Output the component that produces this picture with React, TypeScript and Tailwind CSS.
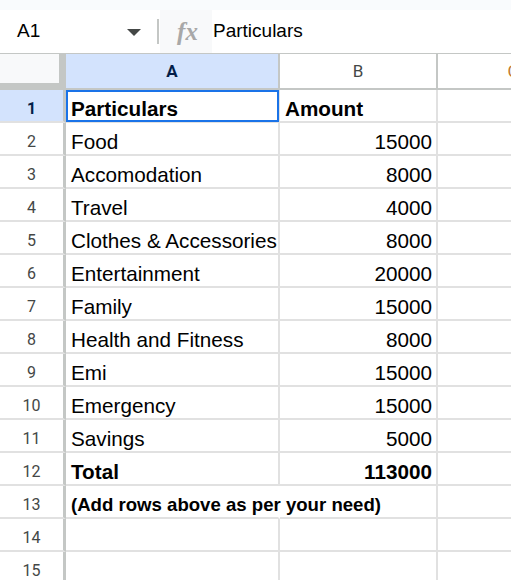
import React from "react";

const rows: { a: string; b: string; bold?: boolean; note?: boolean }[] = [
  { a: "Particulars", b: "Amount", bold: true },
  { a: "Food", b: "15000" },
  { a: "Accomodation", b: "8000" },
  { a: "Travel", b: "4000" },
  { a: "Clothes & Accessories", b: "8000" },
  { a: "Entertainment", b: "20000" },
  { a: "Family", b: "15000" },
  { a: "Health and Fitness", b: "8000" },
  { a: "Emi", b: "15000" },
  { a: "Emergency", b: "15000" },
  { a: "Savings", b: "5000" },
  { a: "Total", b: "113000", bold: true },
  { a: "(Add rows above as per your need)", b: "", note: true },
  { a: "", b: "" },
  { a: "", b: "" },
];

export default function App() {
  return (
    <div className="w-[511px] h-[580px] overflow-hidden bg-white" style={{ fontFamily: '"Liberation Sans", Arial, sans-serif' }}>
      <div className="h-[10px] bg-[#f9fbfd]" />
      {/* formula bar */}
      <div className="h-[43px] flex items-stretch bg-white">
        <div className="w-[157px] flex items-center pl-[17px] pr-[16px]">
          <span className="text-[19px] text-black flex-1">A1</span>
          <svg width="14" height="7" viewBox="0 0 14 7" className="mt-[1px]">
            <path d="M0 0 L14 0 L7 7 Z" fill="#444746" />
          </svg>
        </div>
        <div className="w-[2px] my-[9px] bg-[#c4c7c5]" />
        <div className="w-[52px] ml-[1px] bg-[#f8f9fa] flex items-center justify-center">
          <span className="text-[25px] italic font-bold text-[#a8a8a8] pl-[3px]" style={{ fontFamily: '"Liberation Serif", serif' }}>fx</span>
        </div>
        <div className="flex items-center pl-[1px] text-[19px] text-black">Particulars</div>
      </div>
      {/* header row */}
      <div className="h-[37px] flex border-t border-t-[#c4c7c5]" style={{ fontFamily: 'Roboto, "Liberation Sans", sans-serif' }}>
        <div className="w-[66px] shrink-0 bg-[#c4c7c5]">
          <div className="w-[59px] h-[29px] bg-[#f8f9fa]" />
        </div>
        <div className="w-[214px] shrink-0 bg-[#d3e3fd] border-r-2 border-b-2 border-[#c4c7c5] flex items-center justify-center pt-[2px] text-[17px] font-bold text-[#041e49]">A</div>
        <div className="w-[158px] shrink-0 bg-white border-r-2 border-b-2 border-[#c4c7c5] flex items-center justify-center pt-[2px] text-[17px] text-[#444746]">B</div>
        <div className="w-[152px] shrink-0 bg-white border-r-2 border-b-2 border-[#c4c7c5] flex items-center justify-center pt-[2px] text-[17px] text-[#c07a30]">C</div>
      </div>
      {rows.map((r, i) => (
        <div key={i} className="h-[33px] flex">
          <div
            className={
              i === 0
                ? "w-[66px] shrink-0 bg-[#d3e3fd] border-r-[3px] border-r-[#c4c7c5] border-b-2 border-b-[#e1e1e1] flex items-center justify-center pt-[6px] text-[16px] font-bold text-[#041e49]"
                : "w-[66px] shrink-0 bg-white border-r-[3px] border-r-[#c4c7c5] border-b-2 border-b-[#e1e1e1] flex items-center justify-center pt-[6px] text-[16px] text-[#444746]"
            }
            style={{ fontFamily: 'Roboto, "Liberation Sans", sans-serif' }}
          >
            {i + 1}
          </div>
          <div
            className={
              r.note
                ? "relative z-10 w-[214px] shrink-0 border-r-2 border-r-white border-b-2 border-b-[#e1e1e1] flex items-center pl-[5px] pt-[6px] whitespace-nowrap overflow-visible text-[18.6px] font-bold text-black"
                : r.bold
                ? "relative w-[214px] shrink-0 border-r-2 border-r-[#e1e1e1] border-b-2 border-b-[#e1e1e1] flex items-center pl-[5px] pt-[6px] whitespace-nowrap text-[20.7px] font-bold text-black"
                : "relative w-[214px] shrink-0 border-r-2 border-r-[#e1e1e1] border-b-2 border-b-[#e1e1e1] flex items-center pl-[5px] pt-[6px] whitespace-nowrap text-[20.7px] text-black"
            }
          >
            {r.a}
            {i === 0 && <div className="absolute -left-[0px] -top-[0px] -right-[1px] -bottom-[1px] border-2 border-[#1a73e8]" />}
          </div>
          <div
            className={
              i === 0
                ? "w-[158px] shrink-0 border-r-2 border-r-[#e1e1e1] border-b-2 border-b-[#e1e1e1] flex items-center pl-[5px] pt-[6px] text-[20.7px] font-bold text-black"
                : r.bold
                ? "w-[158px] shrink-0 border-r-2 border-r-[#e1e1e1] border-b-2 border-b-[#e1e1e1] flex items-center justify-end pr-[4px] pt-[6px] text-[20.7px] font-bold text-black"
                : "w-[158px] shrink-0 border-r-2 border-r-[#e1e1e1] border-b-2 border-b-[#e1e1e1] flex items-center justify-end pr-[4px] pt-[6px] text-[20.7px] text-black"
            }
          >
            {r.b}
          </div>
          <div className="w-[152px] shrink-0 border-r-2 border-r-[#e1e1e1] border-b-2 border-b-[#e1e1e1]" />
        </div>
      ))}
    </div>
  );
}
